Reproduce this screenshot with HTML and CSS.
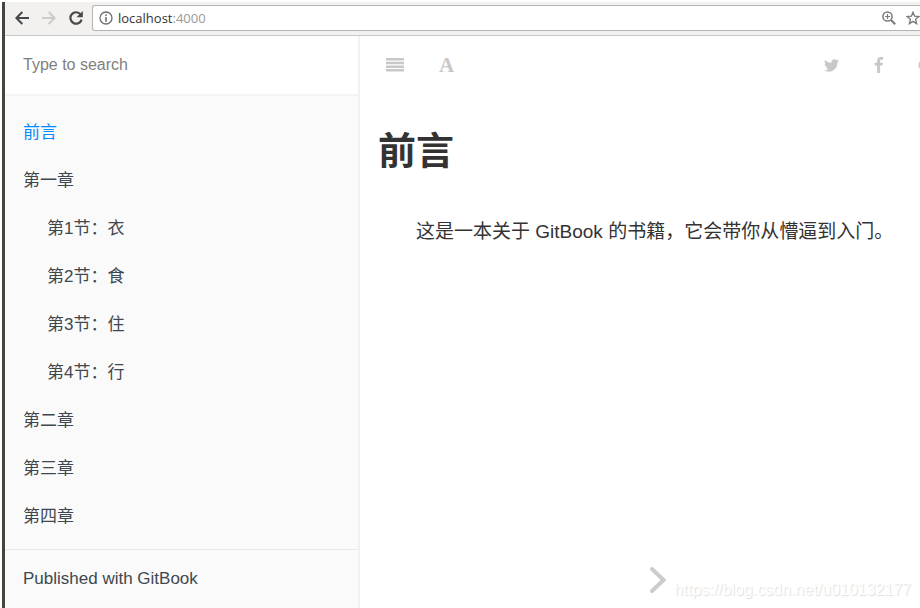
FILE: index.html
```html
<!DOCTYPE html>
<html lang="zh-CN">
<head>
<meta charset="UTF-8">
<meta name="viewport" content="width=device-width, initial-scale=1.0">
<title>前言 · GitBook</title>
<link rel="stylesheet" href="styles.css">
</head>
<body>

<div class="window">

<!-- Browser toolbar -->
<div class="browser-bar">
<button class="nav-btn" aria-label="Back">
<svg width="14" height="14" viewBox="0 0 14 14" fill="none" stroke="#484848" stroke-width="2"><path d="M14 7H1.5M7.3 1L1.4 7l5.9 6"/></svg>
</button>
<button class="nav-btn" aria-label="Forward">
<svg width="14" height="14" viewBox="0 0 14 14" fill="none" stroke="#cbcbca" stroke-width="2"><path d="M0 7h12.5M6.7 1l5.9 6-5.9 6"/></svg>
</button>
<button class="nav-btn" aria-label="Reload">
<svg width="14" height="14" viewBox="0 0 14 14"><path d="M11.6 3.4A5.7 5.7 0 1 0 12.6 8.6" fill="none" stroke="#484848" stroke-width="2.2"/><path d="M13.8 0v6.3H7.5z" fill="#484848"/></svg>
</button>
<div class="address">
<svg width="14" height="14" viewBox="0 0 14 14"><circle cx="7" cy="7" r="6" fill="none" stroke="#6e6e6e" stroke-width="1.3"/><path d="M6.2 3.4h1.6V5H6.2zM6.2 6h1.6v4.7H6.2z" fill="#6e6e6e"/></svg>
<span class="url">localhost<span class="port">:4000</span></span>
<button class="address-btn" aria-label="Zoom">
<svg width="14" height="14" viewBox="0 0 14 14" fill="none" stroke="#7a7a7a"><circle cx="5.5" cy="5.5" r="4.6" stroke-width="1.5"/><path d="M9 9l4.2 4.2" stroke-width="2"/><path d="M3 5.5h5M5.5 3v5" stroke-width="1.2"/></svg>
</button>
<button class="address-btn" aria-label="Bookmark">
<svg width="14" height="14" viewBox="0 0 14 14" fill="none" stroke="#7a7a7a" stroke-width="1.4"><path d="M7 1.3l1.6 3.9 4.3.3-3.3 2.8 1 4.3L7 10.3l-3.6 2.3 1-4.3L1.1 5.5l4.3-.3z"/></svg>
</button>
</div>
</div>

<div class="book">

<!-- Summary -->
<div class="sidebar">
<div class="search">
<input type="text" id="search" aria-label="Type to search" placeholder="Type to search">
</div>
<ul class="summary">
<li><a class="active" href="#">前言</a></li>
<li><a href="#">第一章</a>
<ul class="articles">
<li><a href="#">第1节：衣</a></li>
<li><a href="#">第2节：食</a></li>
<li><a href="#">第3节：住</a></li>
<li><a href="#">第4节：行</a></li>
</ul>
</li>
<li><a href="#">第二章</a></li>
<li><a href="#">第三章</a></li>
<li><a href="#">第四章</a></li>
</ul>
<a class="published" href="#">Published with GitBook</a>
</div>

<!-- Page -->
<div class="page">
<div class="page-header">
<button class="tool" aria-label="Toggle summary">
<svg width="18" height="14" viewBox="0 0 18 14" fill="#c8c8c8"><path d="M0 0h18v2.5H0zM0 3.7h18v2.5H0zM0 7.4h18v2.5H0zM0 11.1h18v2.5H0z"/></svg>
</button>
<button class="tool font-tool" aria-label="Font settings">A</button>
<span class="spacer"></span>
<button class="tool" aria-label="Twitter">
<svg width="15" height="13" viewBox="0 0 24 20" fill="#c8c8c8"><path d="M24 2.4a9.8 9.8 0 0 1-2.8.8A4.9 4.9 0 0 0 23.3.5a9.9 9.9 0 0 1-3.1 1.2A4.9 4.9 0 0 0 11.8 6.1 14 14 0 0 1 1.7 1a4.9 4.9 0 0 0 1.5 6.6A4.9 4.9 0 0 1 1 7v.1a4.9 4.9 0 0 0 3.9 4.8 5 5 0 0 1-2.2.1 4.9 4.9 0 0 0 4.6 3.4A9.9 9.9 0 0 1 0 17.5 14 14 0 0 0 21.5 5.1 10 10 0 0 0 24 2.4z"/></svg>
</button>
<button class="tool" aria-label="Facebook">
<svg width="9" height="16" viewBox="0 0 9 16" fill="#c8c8c8"><path d="M9 .1v2.6H7.5C6.3 2.7 6.1 3.2 6.1 4v1.7h2.8l-.4 2.9H6.1V16H3.1V8.6H.6V5.7h2.5V3.6C3.1 1.2 4.6 0 6.8 0 7.8 0 8.7.1 9 .1z"/></svg>
</button>
<button class="tool" aria-label="Google Plus">
<svg width="20" height="14" viewBox="0 0 20 14" fill="none" stroke="#c8c8c8" stroke-width="2"><path d="M10 3.5A5 5 0 1 0 11.5 7H6.5M14 7h6M17 4v6"/></svg>
</button>
</div>
<div class="content">
<h1>前言</h1>
<p>这是一本关于 GitBook 的书籍，它会带你从懵逼到入门。</p>
</div>
<div class="page-footer">
<a class="next" href="#" aria-label="Next page">
<svg width="16" height="28" viewBox="0 0 16 28" fill="none" stroke="#cccccc" stroke-width="4" stroke-linecap="round"><path d="M2 3L13.5 14 2 25"/></svg>
</a>
<span class="watermark">https://blog.csdn.net/u010132177</span>
</div>
</div>

</div>
</div>

</body>
</html>
```
FILE: styles.css
```css
* {
box-sizing: border-box;
}

body {
margin: 0;
padding: 2px 0 0 2px;
background-color: #fff;
font-family: "Liberation Sans", "Noto Sans CJK SC", sans-serif;
overflow: hidden;
}

button {
padding: 0;
background: none;
border: none;
cursor: pointer;
}

svg {
display: block;
}

a {
text-decoration: none;
}

.window {
display: flex;
flex-direction: column;
min-height: calc(100vh - 2px);
border-left: 3px solid #46443f;
}

/* browser toolbar */
.browser-bar {
display: flex;
align-items: center;
gap: 13px;
height: 34px;
padding: 0 0 2px 10px;
background-color: #f2f1f0;
border-bottom: 1px solid #c9c8c7;
}

.address {
display: flex;
flex: 1;
align-items: center;
height: 26px;
margin-left: -4px;
padding-left: 6px;
background-color: #fff;
border: 1px solid #b5b4b3;
border-right: none;
border-radius: 3px 0 0 3px;
}

.url {
flex: 1;
margin-left: 5px;
font-family: "Open Sans", sans-serif;
font-size: 13px;
color: #333;
}

.port {
color: #999;
}

.address-btn {
margin-left: 10px;
}

/* book */
.book {
display: flex;
flex: 1;
}

.sidebar {
width: 355px;
flex-shrink: 0;
background-color: #fafafa;
border-right: 2px solid #f1f1f1;
}

.search {
background-color: #fff;
border-bottom: 2px solid #f3f3f3;
}

.search input {
display: block;
width: 100%;
height: 58px;
padding: 0 18px;
border: none;
outline: none;
background: transparent;
font-family: inherit;
font-size: 16px;
color: #364149;
}

.search input::placeholder {
color: #808080;
}

.summary {
margin: 0;
padding: 13px 0 8px;
list-style: none;
border-bottom: 1px solid #e9e9e9;
}

.articles {
margin: 0;
padding-left: 24px;
list-style: none;
}

.summary a,
.published {
display: block;
padding: 0 18px;
font-size: 17px;
line-height: 48px;
color: #3f484f;
}

.summary a.active {
color: #008cff;
}

.published {
line-height: 58px;
}

.page {
display: flex;
flex: 1;
flex-direction: column;
min-width: 0;
overflow: hidden;
}

.page-header {
display: flex;
align-items: center;
gap: 35px;
height: 58px;
margin-right: -18px;
padding-left: 26px;
}

.spacer {
flex: 1;
}

.font-tool {
font-family: "Liberation Serif", serif;
font-size: 21px;
font-weight: bold;
color: #c8c8c8;
}

.content {
flex: 1;
padding: 25px 18px 0;
color: #333;
}

.content h1 {
margin: 0;
font-size: 38px;
line-height: 64px;
}

.content p {
margin: 31px 0 0;
font-size: 19px;
line-height: 36px;
text-indent: 2em;
}

.page-footer {
display: flex;
align-items: flex-end;
justify-content: flex-end;
gap: 8px;
padding: 0 9px 9px 0;
}

.next {
padding-bottom: 5px;
}

.watermark {
font-size: 16px;
line-height: 18px;
color: #fff;
text-shadow: 1px 1px 1px #ddd;
}
```
